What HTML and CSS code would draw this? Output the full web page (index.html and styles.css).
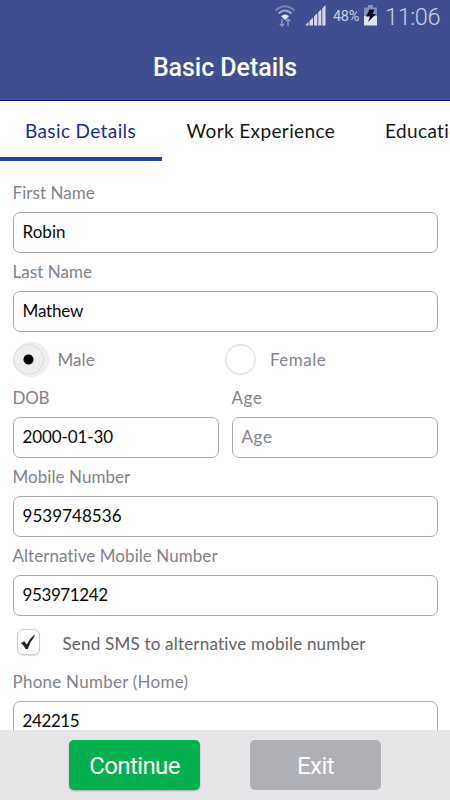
FILE: index.html
```html
<!DOCTYPE html>
<html lang="en">
<head>
<meta charset="utf-8">
<title>Basic Details</title>
<link rel="stylesheet" href="styles.css">
</head>
<body>
<div class="screen">
  <header class="header">
    <div class="status">
      <svg class="wifi" width="22" height="24" viewBox="0 0 22 24" fill="none">
        <path d="M1.500 6.500Q11 -2 20.500 6.500" stroke="#7782b5" stroke-width="2"/>
        <path d="M4.500 9.500Q11 3.500 17.500 9.500" stroke="#9da6cd" stroke-width="2"/>
        <path d="M7 12.200Q11 8.600 15 12.200L11 16Z" fill="#e6e8f4"/>
        <path d="M8 15v7M5.800 19.700L8 22l2.200-2.300M14 22v-7M11.800 17.300L14 15l2.200 2.300" stroke="#8b95c3" stroke-width="1.500"/>
      </svg>
      <svg class="signal" width="21" height="21" viewBox="0 0 21 21" fill="#d3d7eb">
        <path d="M0 20.500l3.500-3.500v3.500zM4.500 16l3.500-3.500v8H4.500zM9 11.500l3.300-3.300v12.300H9zM13.300 7.200l3-3v16.300h-3zM17.300 3.200L20.500 0v20.500h-3.200z"/>
      </svg>
      <span class="percent">48%</span>
      <svg class="battery" width="13" height="21" viewBox="0 0 13 21">
        <path d="M4 0h5v2.500H4zM0 2.500h13V12H0z" fill="#858eb9"/>
        <path d="M0 11h13v9.500H0z" fill="#e2e5f1"/>
        <path d="M5.500 4.500h5L8.500 9H12l-8 8 2-5.500H2z" fill="#080d24"/>
      </svg>
      <span class="clock">11:06</span>
    </div>
    <h1 class="title">Basic Details</h1>
  </header>
  <nav class="tabs">
    <a class="tab active">Basic Details</a>
    <a class="tab work">Work Experience</a>
    <a class="tab">Education</a>
  </nav>
  <main class="form">
    <label class="label">First Name</label>
    <div class="input">Robin</div>
    <label class="label">Last Name</label>
    <div class="input mathew">Mathew</div>
    <div class="radios">
      <div class="choice"><span class="radio checked"></span><span class="male">Male</span></div>
      <div class="choice"><span class="radio"></span><span class="female">Female</span></div>
    </div>
    <div class="pair">
      <div><label class="label dob">DOB</label><div class="input date">2000-01-30</div></div>
      <div><label class="label age">Age</label><div class="input placeholder">Age</div></div>
    </div>
    <label class="label">Mobile Number</label>
    <div class="input">9539748536</div>
    <label class="label alternative">Alternative Mobile Number</label>
    <div class="input narrow">953971242</div>
    <div class="sms">
      <span class="checkbox"><svg width="16" height="17" viewBox="0 0 16 17"><path d="M1 9l3.300-1.800 2.500 3.300Q9.500 4.500 14 1l1 .8Q10.500 7 7.800 15H5.500Q4 11.500 1 9Z" fill="#252528"/></svg></span>
      <span class="sms-text">Send SMS to alternative mobile number</span>
    </div>
    <label class="label phone">Phone Number (Home)</label>
    <div class="input narrow">242215</div>
  </main>
  <footer class="footer">
    <button class="button continue">Continue</button>
    <button class="button exit">Exit</button>
  </footer>
</div>
</body>
</html>
```

FILE: styles.css
```css
* { box-sizing: border-box; }
body { margin: 0; background: #fff; }
.screen { width: 450px; height: 800px; overflow: hidden; display: flex; flex-direction: column; font-family: Lato, sans-serif; }
.header { flex: 0 0 101px; min-height: 0; background: #404e91; border-bottom: 1px solid #00127c; color: #fff; }
.status { height: 33px; padding-right: 11px; display: flex; align-items: center; justify-content: flex-end; font-family: Roboto, sans-serif; color: #c9cee6; }
.wifi { margin: -2px 9px 0 0; }
.signal { margin: -3px 7px 0 0; }
.percent { width: 28px; font-size: 14.500px; letter-spacing: -.3px; white-space: nowrap; }
.battery { margin: -3px 8px 0 3px; }
.clock { width: 54px; font-size: 23.500px; font-weight: 300; letter-spacing: -.4px; white-space: nowrap; }
.title { margin: 0; height: 67px; text-align: center; font: 500 25px/70px Roboto, sans-serif; letter-spacing: -.05px; }
.tabs { flex: 0 0 60px; display: flex; overflow: hidden; }
.tab { flex: none; height: 60px; padding: 0 25px; font-size: 19px; line-height: 59px; color: #151515; white-space: nowrap; letter-spacing: .38px; }
.tab.active { width: 161.500px; color: #1c2a96; border-bottom: 4px solid #27429b; }
.tab.work { width: 198.500px; }
.form { flex: 1; min-height: 0; overflow: hidden; padding: 13px 12.500px 0; color: #828289; font-size: 17px; letter-spacing: .06px; }
.label { display: block; height: 38px; line-height: 38px; white-space: nowrap; }
.dob { letter-spacing: -.3px; }
.age { letter-spacing: .6px; }
.phone { letter-spacing: .25px; }
.input { height: 41.200px; border: 1px solid #aaaab2; border-radius: 7px; padding-left: 9px; line-height: 38px; color: #080808; background: #fff; letter-spacing: .05px; }
.input.mathew { letter-spacing: -.15px; }
.input.date { letter-spacing: -.1px; }
.input.narrow { letter-spacing: -.4px; }
.input.placeholder { color: #828289; letter-spacing: .6px; }
.radios { display: flex; height: 46.500px; padding-top: 11px; }
.choice { width: 212.500px; display: flex; gap: 14px; height: 32px; align-items: center; }
.female { letter-spacing: .5px; }
.radio { width: 31px; height: 31px; border: 1.500px solid #dedede; border-radius: 50%; box-shadow: inset 0 0 0 .5px #e8e8e8; }
.radio.checked { background: radial-gradient(circle at 50% 50%, #000 0 4.500px, #eee 5.500px); border-color: #d6d6d6; box-shadow: 3px 0 0 2px #eee; }
.pair { display: grid; grid-template-columns: 1fr 1fr; gap: 13px; }
.sms { height: 46.500px; padding: 13px 0 0 4px; display: flex; align-items: flex-start; gap: 23px; color: #626267; }
.checkbox { width: 23px; height: 26px; border: 1.500px solid #ccc; border-radius: 6px; display: flex; align-items: center; justify-content: center; box-shadow: 0 1px 1px #ddd; }
.sms-text { line-height: 30px; white-space: nowrap; letter-spacing: .2px; }
.footer { flex: 0 0 70px; display: flex; align-items: flex-start; gap: 50px; padding: 10px 0 0 69px; background: #e6e6e9; }
.button { width: 131px; height: 50px; padding: 0; border: 0; border-radius: 5px; color: #fff; font: 400 24px/52px Roboto, sans-serif; letter-spacing: -.6px; }
.continue { background: #04b04e; box-shadow: 0 1px 2px #aaa; }
.exit { background: #afb0b6; }
```
